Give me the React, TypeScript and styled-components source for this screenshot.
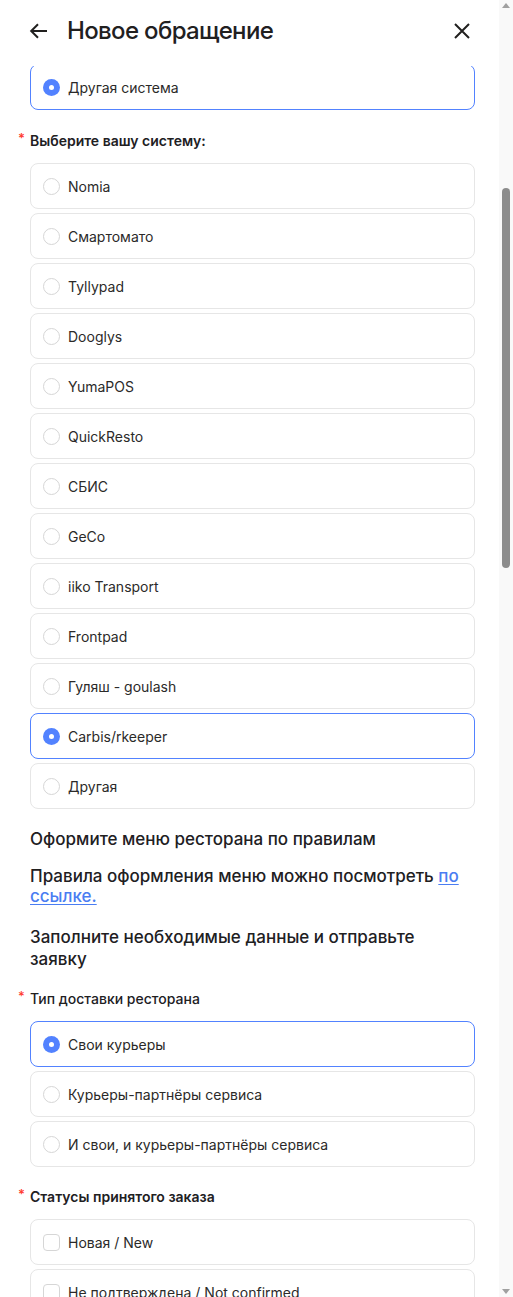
import React from "react";
import styled, { createGlobalStyle } from "styled-components";

const GlobalStyle = createGlobalStyle`
  html, body {
    margin: 0;
    padding: 0;
    background: #fff;
  }
  body {
    font-family: Inter, "Noto Sans", "Liberation Sans", sans-serif;
    color: #21201f;
  }
`;

const systems = [
  "Nomia",
  "Смартомато",
  "Tyllypad",
  "Dooglys",
  "YumaPOS",
  "QuickResto",
  "СБИС",
  "GeCo",
  "iiko Transport",
  "Frontpad",
  "Гуляш - goulash",
  "Carbis/rkeeper",
  "Другая",
];

const delivery = ["Свои курьеры", "Курьеры-партнёры сервиса", "И свои, и курьеры-партнёры сервиса"];
const statuses = ["Новая / New", "Не подтверждена / Not confirmed"];

export default function App() {
  return (
    <>
      <GlobalStyle />
      <Window>
        <Main>
          <Header>
            <IconButton aria-label="Назад">
              <svg width="20" height="20" viewBox="0 0 20 20" fill="none">
                <path d="M18 10H2.5M9 3.2L2.2 10 9 16.8" stroke="#21201f" strokeWidth="2" />
              </svg>
            </IconButton>
            <Title>Новое обращение</Title>
            <IconButton aria-label="Закрыть">
              <svg width="20" height="20" viewBox="0 0 20 20" fill="none">
                <path d="M3 3L17 17M17 3L3 17" stroke="#21201f" strokeWidth="2" />
              </svg>
            </IconButton>
          </Header>
          <Body>
            <Content>
              <Option $selected>
                <Radio $selected />
                Другая система
              </Option>

              <Label $top={21}>
                <Star>*</Star>Выберите вашу систему:
              </Label>
              <Options>
                {systems.map((s) => (
                  <Option key={s} $selected={s === "Carbis/rkeeper"}>
                    <Radio $selected={s === "Carbis/rkeeper"} />
                    {s}
                  </Option>
                ))}
              </Options>

              <Heading $top={19}>Оформите меню ресторана по правилам</Heading>
              <Text>
                Правила оформления меню можно посмотреть <a href="#">по ссылке.</a>
              </Text>
              <Heading $top={20} $wide>
                Заполните необходимые данные и отправьте заявку
              </Heading>

              <Label $top={19} $plain>
                <Star>*</Star>Тип доставки ресторана
              </Label>
              <Options>
                {delivery.map((d, i) => (
                  <Option key={d} $selected={i === 0}>
                    <Radio $selected={i === 0} />
                    {d}
                  </Option>
                ))}
              </Options>

              <Label $top={20}>
                <Star>*</Star>Статусы принятого заказа
              </Label>
              <Options>
                {statuses.map((s) => (
                  <Option key={s}>
                    <Checkbox />
                    {s}
                  </Option>
                ))}
              </Options>
            </Content>
          </Body>
        </Main>
        <Scrollbar>
          <Arrow $down={false} />
          <Track>
            <Thumb />
          </Track>
          <Arrow $down />
        </Scrollbar>
      </Window>
    </>
  );
}

const Window = styled.div`
  display: flex;
  width: 513px;
  height: 1297px;
  overflow: hidden;
`;

const Main = styled.div`
  flex: 1;
  display: flex;
  flex-direction: column;
  min-width: 0;
`;

const Header = styled.header`
  height: 66px;
  flex-shrink: 0;
  display: flex;
  align-items: center;
  padding: 0 26px 4px 28px;
  box-sizing: border-box;
  background: #fff;
`;

const IconButton = styled.button`
  width: 22px;
  height: 22px;
  padding: 0;
  border: 0;
  background: none;
  display: flex;
  align-items: center;
  justify-content: center;
`;

const Title = styled.h1`
  flex: 1;
  margin: 0 0 0 17px;
  font-size: 24px;
  font-weight: 500;
  line-height: 30px;
  letter-spacing: -0.65px;
`;

const Body = styled.div`
  flex: 1;
  overflow: hidden;
`;

const Content = styled.div`
  margin-top: -2px;
  padding: 0 24px 0 30px;
  display: flex;
  flex-direction: column;
`;

const Options = styled.div`
  display: flex;
  flex-direction: column;
  gap: 4px;
`;

const Option = styled.label<{ $selected?: boolean }>`
  height: 46px;
  box-sizing: border-box;
  display: flex;
  align-items: center;
  gap: 8px;
  padding: 0 12px;
  border: 1px solid ${(p) => (p.$selected ? "#5282ff" : "#e6e6e6")};
  border-radius: 8px;
  font-size: 14px;
  color: #2b2a29;
`;

const Radio = styled.span<{ $selected?: boolean }>`
  width: 17px;
  height: 17px;
  box-sizing: border-box;
  border-radius: 50%;
  flex-shrink: 0;
  background: ${(p) => (p.$selected ? "#5282ff" : "#fff")};
  border: ${(p) => (p.$selected ? "none" : "1px solid #d6d6d6")};
  display: flex;
  align-items: center;
  justify-content: center;
  &::after {
    content: "";
    width: 5px;
    height: 5px;
    border-radius: 50%;
    background: #fff;
    display: ${(p) => (p.$selected ? "block" : "none")};
  }
`;

const Checkbox = styled.span`
  width: 17px;
  height: 17px;
  box-sizing: border-box;
  border-radius: 4px;
  flex-shrink: 0;
  border: 1px solid #d6d6d6;
`;

const Label = styled.div<{ $plain?: boolean; $top: number }>`
  display: flex;
  margin: ${(p) => p.$top}px 0 12px -12px;
  font-size: 14px;
  line-height: 20px;
  font-weight: ${(p) => (p.$plain ? 500 : 600)};
`;

const Star = styled.span`
  width: 12px;
  color: #ff3b30;
  font-size: 13px;
  line-height: 14px;
`;

const Heading = styled.h2<{ $wide?: boolean; $top: number }>`
  margin: ${(p) => p.$top}px ${(p) => (p.$wide ? "30px" : "0")} 0 0;
  font-size: 17px;
  line-height: 22px;
  font-weight: 500;
`;

const Text = styled.p`
  margin: 16px 0 0;
  font-size: 17px;
  line-height: 20px;
  font-weight: 500;
  a {
    color: #4a7df2;
    text-decoration: underline;
    text-underline-offset: 2px;
  }
`;

const Scrollbar = styled.div`
  width: 14px;
  flex-shrink: 0;
  background: #f9f9f9;
  display: flex;
  flex-direction: column;
  align-items: center;
`;

const Arrow = styled.div<{ $down: boolean }>`
  width: 0;
  height: 0;
  margin: 3px 0;
  border-left: 4px solid transparent;
  border-right: 4px solid transparent;
  ${(p) => (p.$down ? "border-top: 5px solid #a0a0a0;" : "border-bottom: 5px solid #a0a0a0;")}
`;

const Track = styled.div`
  flex: 1;
  width: 100%;
  display: flex;
  justify-content: center;
`;

const Thumb = styled.div`
  width: 8px;
  height: 380px;
  margin-top: 177px;
  border-radius: 4px;
  background: #8c8c8c;
`;
